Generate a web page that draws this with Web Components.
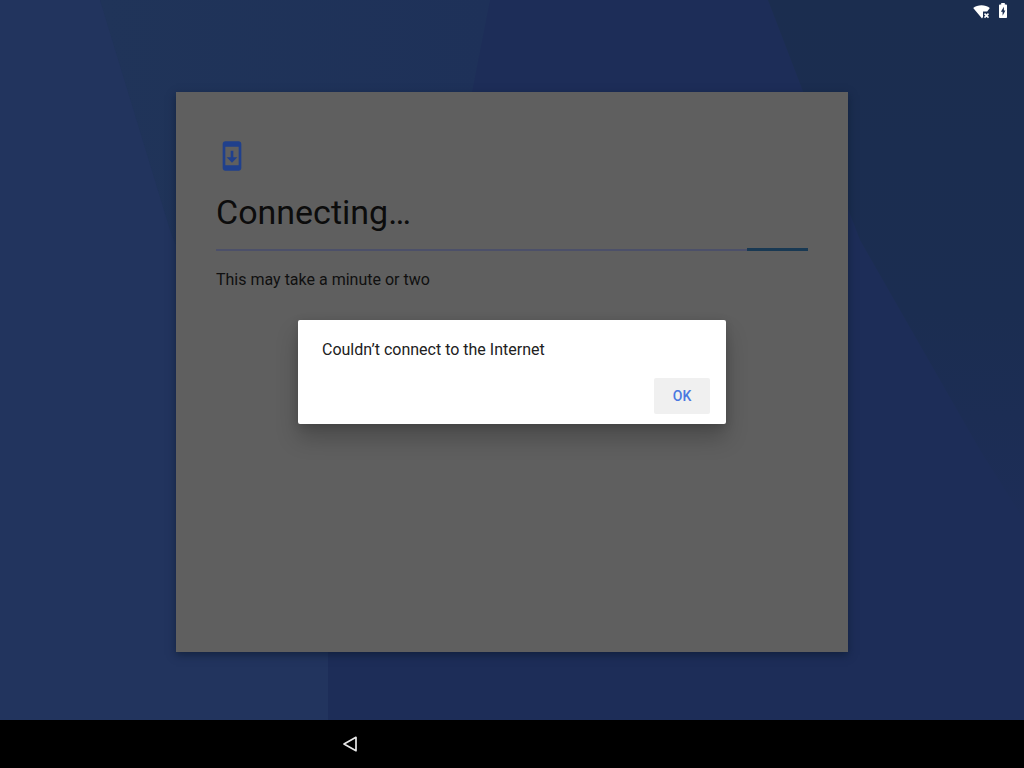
<!DOCTYPE html>
<html lang="en">
<head>
<meta charset="utf-8">
<meta name="viewport" content="width=device-width, initial-scale=1">
<title>Setup</title>
<style>
  html, body { margin: 0; height: 100%; }
  body { font-family: Roboto, "Liberation Sans", sans-serif; background: #000; }
</style>
</head>
<body>
<setup-screen>
  <status-bar slot="status"></status-bar>
  <setup-card heading="Connecting…">
    <setup-progress slot="progress"></setup-progress>
    This may take a minute or two
  </setup-card>
  <alert-dialog slot="dialog" action="OK">Couldn’t connect to the Internet</alert-dialog>
  <nav-bar slot="nav"></nav-bar>
</setup-screen>

<script>
const define = (name, html, setup) => {
  const template = document.createElement('template');
  template.innerHTML = html;
  customElements.define(name, class extends HTMLElement {
    constructor() {
      super();
      this.attachShadow({ mode: 'open' }).append(template.content.cloneNode(true));
    }
    connectedCallback() { if (setup) setup(this, this.shadowRoot); }
  });
};

define('setup-screen', `
  <style>
    :host { display: flex; flex-direction: column; min-height: 100vh; }
    .desk { position: relative; flex: 1; display: flex; flex-direction: column; background: #1d2d58; }
    .wallpaper { position: absolute; inset: 0; width: 100%; height: 100%; }
    .status, main { position: relative; }
    main { flex: 1; display: flex; align-items: center; justify-content: center; }
    .overlay { position: absolute; inset: 0; display: flex; align-items: center; justify-content: center; }
  </style>
  <div class="desk">
    <svg class="wallpaper" viewBox="0 0 1024 720" preserveAspectRatio="none" aria-hidden="true">
      <defs>
        <linearGradient id="band" x1="0" y1="0" x2="1" y2="0">
          <stop offset="0" stop-color="#203459"/><stop offset="1" stop-color="#1e3159"/>
        </linearGradient>
        <linearGradient id="corner" x1="0" y1="0" x2="0" y2="1">
          <stop offset="0" stop-color="#1b2d4f"/><stop offset=".6" stop-color="#1b2d51"/><stop offset="1" stop-color="#1d2d57"/>
        </linearGradient>
      </defs>
      <path fill="url(#band)" d="M100 0H490L472 92L340 600L240 720Z"/>
      <path fill="#22345e" d="M0 0H100L170 230L328 640V720H0Z"/>
      <path fill="url(#corner)" d="M768 0H1024V520L980 450L860 240Z"/>
    </svg>
    <div class="status"><slot name="status"></slot></div>
    <main>
      <slot></slot>
      <div class="overlay"><slot name="dialog"></slot></div>
    </main>
  </div>
  <slot name="nav"></slot>
`);

define('status-bar', `
  <style>
    :host { display: flex; justify-content: flex-end; align-items: center; gap: 4px;
            height: 24px; padding: 0 12px 2px; box-sizing: border-box; }
    svg { display: block; fill: #fff; }
  </style>
  <svg width="18" height="18" viewBox="0 0 18 18" role="img" aria-label="Wi-Fi without Internet">
    <path d="M1.200 6C5.500 2.300 13.500 2.300 17.800 6L15.200 9.500H11V15L10 16.500Z"/>
    <path d="M12.500 11.600L16.500 15.600M16.500 11.600L12.500 15.600" stroke="#fff" stroke-width="1.500"/>
  </svg>
  <svg width="18" height="18" viewBox="0 0 18 18" role="img" aria-label="Battery charging">
    <path fill-rule="evenodd" d="M7.200 1H10.800V2.600H12.200Q13 2.600 13 3.400V15.200Q13 16 12.200 16H5.800Q5 16 5 15.200V3.400Q5 2.600 5.800 2.600H7.200ZM9.900 4.700L6.900 9.800H8.600V13.800L11.400 8.600H9.900Z"/>
  </svg>
`);

define('setup-card', `
  <style>
    :host { display: block; box-sizing: border-box; width: 672px; max-width: 100%; min-height: 560px;
            padding: 48px 40px; background: #5f5f5f; color: #101010;
            box-shadow: 0 3px 8px rgba(10, 25, 45, .6); }
    svg { display: block; fill: #20408c; }
    h1 { margin: 18px 0 14px; font-size: 34px; line-height: 44px; font-weight: 400; color: #0c0c0c; }
    p { margin: 17px 0 0; font-size: 16px; line-height: 24px; }
  </style>
  <svg width="32" height="32" viewBox="0 0 24 24" aria-hidden="true">
    <path d="M17 1.010L7 1c-1.100 0-2 .9-2 2v18c0 1.100.9 2 2 2h10c1.100 0 2-.9 2-2V3c0-1.100-.9-1.990-2-1.990zM17 19H7V5h10v14zm-1-6h-3V8h-2v5H8l4 4 4-4z"/>
  </svg>
  <h1></h1>
  <slot name="progress"></slot>
  <p><slot></slot></p>
`, (el, root) => { root.querySelector('h1').textContent = el.getAttribute('heading'); });

define('setup-progress', `
  <style>
    :host { display: block; }
    .track { display: flex; justify-content: flex-end; align-items: center; height: 3px;
             background: linear-gradient(#4c5069, #4c5069) center / 100% 2px no-repeat; }
    .bar { width: 61px; height: 3px; background: #193953; }
  </style>
  <div class="track" role="progressbar" aria-label="Connecting"><div class="bar"></div></div>
`);

define('alert-dialog', `
  <style>
    :host { display: block; box-sizing: border-box; width: 428px; max-width: 100%; background: #fff;
            border-radius: 2px; padding: 18px 16px 10px 24px;
            box-shadow: 0 14px 22px rgba(0, 0, 0, .22), 0 2px 8px rgba(0, 0, 0, .14); }
    p { margin: 0 0 16px; font-size: 16px; line-height: 24px; color: #212121; }
    .actions { display: flex; justify-content: flex-end; }
    button { width: 56px; height: 36px; padding: 0; border: 0; border-radius: 2px; background: #f0f0f0;
             font: 500 14px/20px Roboto, "Liberation Sans", sans-serif; color: #4a78e0; }
  </style>
  <div role="alertdialog" aria-labelledby="message">
    <p id="message"><slot></slot></p>
    <div class="actions"><button type="button"></button></div>
  </div>
`, (el, root) => { root.querySelector('button').textContent = el.getAttribute('action'); });

define('nav-bar', `
  <style>
    :host { display: flex; justify-content: center; height: 48px; background: #000; }
    nav { display: grid; grid-template-columns: repeat(3, 162px); }
    button { display: flex; align-items: center; justify-content: center; border: 0; padding: 0; background: none; }
  </style>
  <nav aria-label="System navigation">
    <button type="button" aria-label="Back">
      <svg width="24" height="24" viewBox="0 0 24 24" fill="none" stroke="#e8e8e8" stroke-width="1.700" stroke-linejoin="round" aria-hidden="true">
        <path d="M18 5.300V18.700L6 12Z"/>
      </svg>
    </button>
  </nav>
`);
</script>
</body>
</html>
